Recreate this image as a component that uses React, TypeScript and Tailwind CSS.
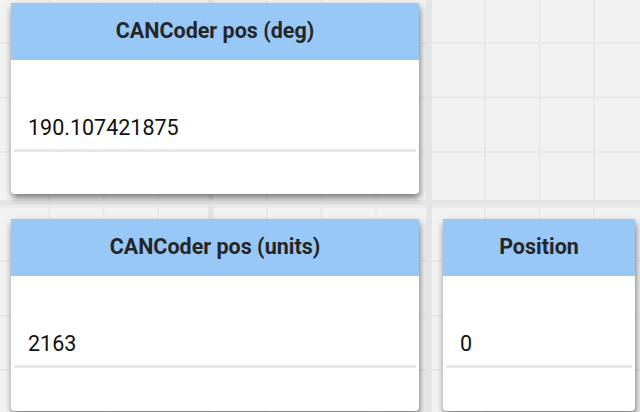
const tiles = [
  { title: "CANCoder pos (deg)", value: "190.107421875", place: "col-start-1 row-start-1" },
  { title: "CANCoder pos (units)", value: "2163", place: "col-start-1 row-start-2" },
  { title: "Position", value: "0", place: "col-start-2 row-start-2" },
];

function TextView({ title, value, place }: { title: string; value: string; place: string }) {
  return (
    <div className={`${place} flex flex-col bg-white rounded-b-[4px] shadow-[1px_4px_7px_rgba(0,0,0,0.5)]`}>
      <div className="h-[57px] shrink-0 flex items-center justify-center bg-[#98c8f8] text-[21.5px] font-bold text-[#262626]">
        {title}
      </div>
      <div className="mx-[3px] mt-[55px] pl-[14px] pb-[8px] border-b-[3px] border-[#e8e8e8] text-[21.5px] leading-[26px] text-[#111]">
        {value}
      </div>
    </div>
  );
}

export default function App() {
  return (
    <div
      className="w-[640px] h-[412px] overflow-hidden bg-[#f2f2f2] font-['Roboto',sans-serif]
        bg-[image:linear-gradient(90deg,#e5e5e5_6px,transparent_6px),linear-gradient(#e5e5e5_5px,transparent_5px),linear-gradient(90deg,#e8e8e8_2px,transparent_2px),linear-gradient(#e8e8e8_2px,transparent_2px)]
        bg-[size:218px_218px,218px_218px,54.5px_54.5px,54.5px_54.5px]
        bg-[position:208px_0,0_200px,48px_0,0_42px]"
    >
      <div className="grid grid-cols-[408px_192px] grid-rows-[191px_192px] gap-x-[24px] gap-y-[25px] pl-[11px] pt-[3px]">
        {tiles.map((t) => (
          <TextView key={t.title} {...t} />
        ))}
      </div>
    </div>
  );
}
